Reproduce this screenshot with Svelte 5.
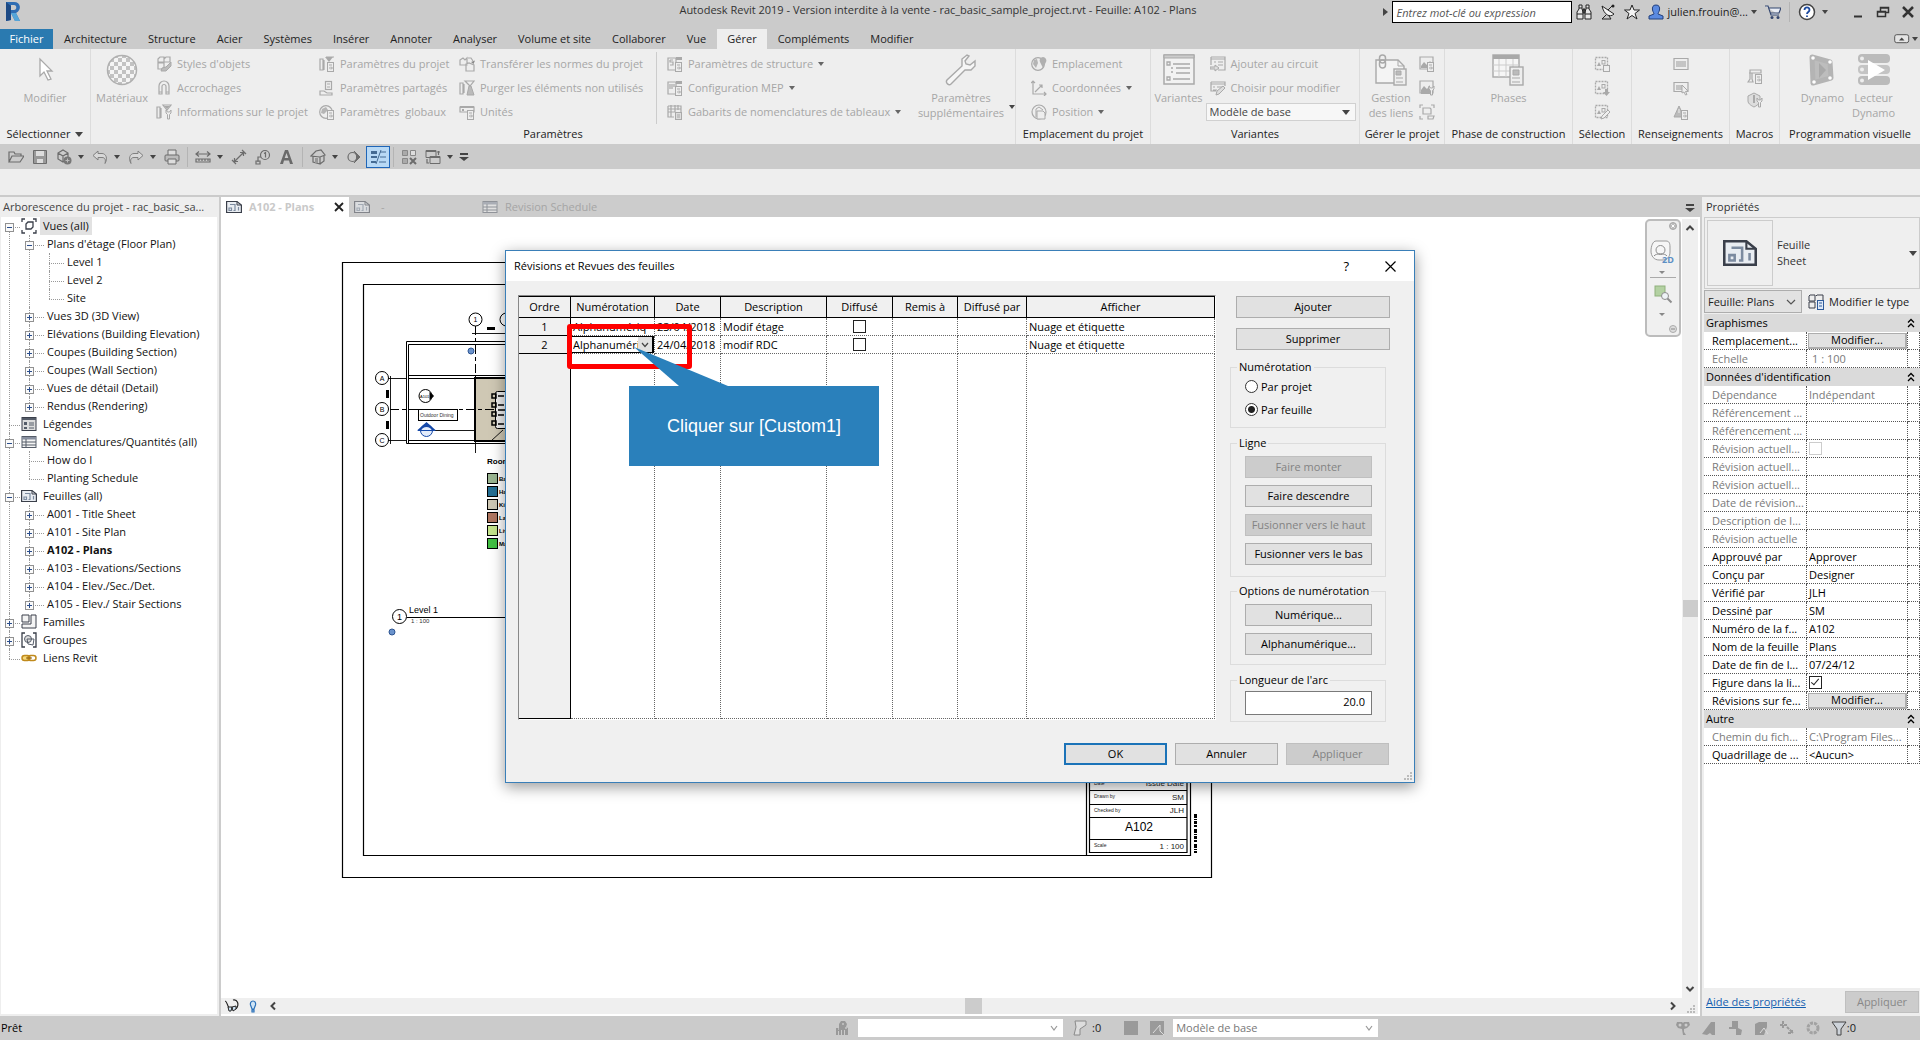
<script>
  // stroke/fill helpers for the greyed out ribbon icons
  const g = 'fill="none" stroke="#a9a9a9" stroke-width="1.2"'
  const d = 'fill="none" stroke="#6c6c6c" stroke-width="1.2"'
  const k = 'fill="none" stroke="#3a3f4a" stroke-width="1.3"'
  const page = '<rect x="8.5" y="6.5" width="6" height="9" fill="#eee" stroke="#a9a9a9"/><path d="M10 9h3M10 12h3M12 10.500l1.500 1.500-1.500 1.500" fill="none" stroke="#a9a9a9"/>'
  const wrench = '<path d="M10 6v3l1.500 1.500V15h2v-4.500L15 9V6l-1.500 2h-2z" fill="#eee" stroke="#a9a9a9"/>'
  const picks = '<path d="M1.500 1.500h12v12h-12z" fill="none" stroke="#a9a9a9" stroke-width="1.300" stroke-dasharray="2 1"/><path d="M3 10l2-4 2 4z" fill="#a9a9a9"/><rect x="8" y="4.500" width="3" height="3.500" fill="none" stroke="#a9a9a9"/>'

  const icons = {
    styles: `<path d="M2 3l2-2h4v5H2zM8 3l2-2h4v5H8zM2 7h6v6H2z" ${g}/><path d="M15 6l-5 5-4 1-1 3h5l5-5z" fill="#bbb" stroke="#a9a9a9"/>`,
    magnet: `<path d="M3 14V6a5 5 0 0 1 10 0v8h-3V6.500a2 2 0 0 0-4 0V14z" ${g}/><path d="M3 12h3M10 12h3" ${g}/>`,
    info: `<path d="M1 3h3v11H1zM5 14V4M7 1h8l-4 5z" ${g}/><path d="M8 2h6l-3 3z" fill="#a9a9a9"/>${wrench}`,
    projParam: `<path d="M1 3h3v11H1zM5 14V4M7 1h8" ${g}/><path d="M6 1h8l-4 5z" fill="#a9a9a9"/>${page}`,
    shared: `<rect x="6.500" y="1.500" width="6" height="8" ${g}/><path d="M8 4h3M8 7h3M1 11h4l3 2h5v2H1z" ${g}/>`,
    global: `<circle cx="7" cy="8" r="6.300" ${g}/><path d="M3 5l4-2 2 3-4 4-3-1z" fill="#b5b5b5"/>${page}`,
    transfer: `<path d="M1 4l3-2 2 2 2-2v7H1zM7 15V8l3-1 5 2v6zM9 2h3l2 3" ${g}/><path d="M12 6l2.500 2L16 4.500z" fill="#888"/>`,
    purge: `<path d="M1 3h3v11H1zM5 13V4M6 1h9l-4 5z" ${g}/><path d="M10 6h2l3 9H8z" fill="#bbb" stroke="#a9a9a9"/>`,
    units: `<path d="M1 3h14v5H1z" ${g}/><path d="M1 2h14v2H1zM3 5h2v2H3z" fill="#a9a9a9"/>${page}`,
    struct: `<path d="M1 2h8v12H1zM3 4h3M3 4v2h3v3H3" ${g}/><path d="M9 1h6v3H9z" fill="#a9a9a9"/>${page}`,
    mep: `<path d="M1 2h8v12H1zM3 4v5M5 4v5M7 4v3" ${g}/><path d="M9 1h6v3H9z" fill="#a9a9a9"/>${page}`,
    sched: `<path d="M1 2h13v9M1 2v11h6M1 5h13M1 8h7M4 1v12M8 1v7M11 1v5" ${g}/><rect x="8.500" y="8.500" width="6" height="7" fill="#ddd" stroke="#a9a9a9"/><path d="M10 11h3M10 13h3" ${g}/>`,
    place: `<circle cx="7" cy="8" r="6.300" ${g}/><path d="M3 4l3-1 1 4-2 5-3-4z" fill="#b5b5b5"/><path d="M12 1a3.500 3.500 0 0 1 3 5l-3 6-3-6a3.500 3.500 0 0 1 3-5z" fill="#b0b0b0"/>`,
    coords: `<path d="M2 1v13h13M0 3l2-2 2 2M13 12l2 2-2 2M4 12l7-7M8 5h3v3" ${g}/>`,
    position: `<circle cx="8" cy="8" r="7" ${g}/><path d="M5 13V5l3-2 4 3M6 7h6l2 2v6H6z" fill="#eee" stroke="#a9a9a9"/>`,
    addSet: `<path d="M1 1h14v13H8M1 1v8M1 3h14M4 6h2M8 6h5M8 9h5" ${g}/><path d="M0 11h5V9l4 3-4 3v-2H0z" fill="#ddd" stroke="#a9a9a9"/>`,
    pick: `<path d="M1 2h14v4M1 2v9h5M1 4h14M3 7h2M7 7h5M3 10h4" ${g}/><path d="M6 15l1-4 6-5 2 2-6 6z" fill="#ddd" stroke="#a9a9a9"/>`,
    decal: `<path d="M1 1h13v12H1z" ${g}/><path d="M2 10l3-4 3 3 3-4 3 4v3H2z" fill="#a9a9a9"/>${page}`,
    decalTool: `<path d="M1 1h13v12H1z" ${g}/><path d="M2 10l3-4 3 3 3-4v9H2z" fill="#a9a9a9"/>${wrench}`,
    start: `<path d="M1 4V1h3M12 1h3v3M1 12v3h3M4 4h7l1 1v5H4zM9 12h6l-1 3H9z" ${g}/>`,
    selSave: picks + `<rect x="9.500" y="9.500" width="6" height="6" fill="#eee" stroke="#a9a9a9"/>`,
    selLoad: picks + `<path d="M11 9h3v3h2l-3.500 4L9 12h2z" fill="#a9a9a9"/>`,
    selEdit: picks + `<path d="M7 15l1-3 6-6 2 2-6 6z" fill="#eee" stroke="#a9a9a9"/>`,
    ids: `<path d="M1 2.500h14v11H1zM4 5v6M6 5v6M8 5v6M10 5v6M12 5v6" ${g}/>`,
    idSel: `<path d="M1 2.500h14v9H1zM4 5v5M6 5v5M8 5v5" ${g}/><path d="M9 5l6 6-2.500.500 1.500 3-1.500.500-1.500-3L9 13z" fill="#eee" stroke="#a9a9a9"/>`,
    warn: `<path d="M6 2l5 11H1z" fill="#bbb" stroke="#a9a9a9"/><path d="M6 5v4" stroke="#eee"/>${page}`,
    macro: `<path d="M3 2h11v3H5v6l1 3H1l2-3zM2 5h3" ${g}/>${page}`,
    macroSec: `<path d="M7 1l6 3v5c0 3-4 5-6 6-2-1-6-3-6-6V4z" fill="#ddd" stroke="#a9a9a9"/><path d="M7 3v8" stroke="#a9a9a9" stroke-width="2"/>${wrench}`,
    // quick access bar
    open: `<path d="M1 13V3h5l1 2h6v2M1 13l3-6h12l-4 6z" ${d}/>`,
    save: `<path d="M1.500 1.500h13v13h-13z" fill="#999" stroke="#6c6c6c"/><path d="M4 2h8v5H4zM5 10h6v4H5z" fill="#ddd"/>`,
    sync: `<path d="M2 4l5-3 5 3v6l-5 3-5-3zM2 4l5 3 5-3M7 7v6" ${d}/><circle cx="11.500" cy="11.500" r="4" fill="#777"/><path d="M9.500 11.500h4M11.500 9.500v4" stroke="#bbb"/>`,
    undo: `<path d="M6 2L1 6.500 6 11V8.500h4c3 0 4 2 3 6 3-5 1-10-3-10H6z" fill="#d8d8d8" stroke="#808080"/>`,
    redo: `<path d="M10 2l5 4.500-5 4.500V8.500H6c-3 0-4 2-3 6-3-5-1-10 3-10h4z" fill="#d8d8d8" stroke="#808080"/>`,
    print: `<path d="M4 6V1h8v5" fill="#ddd" stroke="#6c6c6c"/><rect x="1" y="6" width="14" height="6" rx="1" fill="#bbb" stroke="#6c6c6c"/><path d="M4 10h8v5H4z" fill="#ddd" stroke="#6c6c6c"/>`,
    measure: `<path d="M1 5h14M4 2.500L1 5l3 2.500M12 2.500L15 5l-3 2.500M1 10h14v3H1zM4 10v2M7 10v2M10 10v2M13 10v2" ${d}/>`,
    aligned: `<path d="M4 12l8-8M9 3.500h3.500V7M3.500 9v3.500H7M1 11l4 4M11 1l4 4" ${d}/>`,
    tag: `<circle cx="10" cy="6" r="4.500" ${d}/><path d="M10.500 8.500v-5L9 4.500M6 8H3v5M1 12h4v3H1z" ${d}/>`,
    text: `<path d="M1 15L6 1h3l5 14h-3l-1-3.500H5L4 15zM5.700 9h3.600L7.500 4z" fill="#6a6a6a" fill-rule="evenodd"/>`,
    house: `<path d="M1 7l5-5 5-1 4 5-5 2zM3 7v6l7 2V8M10 15l4-3V6" ${d}/><path d="M5 9h3v5H5z" fill="#999"/>`,
    section: `<circle cx="6.500" cy="8" r="4.500" ${d}/><path d="M8 2l6 6-6 6c3.500-4 3.500-8 0-12z" fill="#6c6c6c" stroke="#6c6c6c"/>`,
    thin: `<path d="M1 2h6v3H1zM1 7h6v2H1zM1 12h5v2H1z" fill="#456b93"/><path d="M10 3h6M10 8h6M9 13h7M6 15l5-14" fill="none" stroke="#456b93"/>`,
    closeHid: `<path d="M1.500 1.500h5v5h-5zM1.500 9.500h5v5h-5z" fill="#aaa" stroke="#888"/><path d="M9.500 1.500h5v5h-5z" fill="#ddd" stroke="#888"/><path d="M9 9l6 6M15 9l-6 6" stroke="#6c6c6c" stroke-width="2"/>`,
    windows: `<path d="M1 1.500h10v7H1zM5 7.500h10v7H5z" fill="#ccc" stroke="#6c6c6c"/><path d="M1 1h10v2H1zM5 7h10v2H5z" fill="#6c6c6c"/><path d="M12 3h3M13.500 2v4M2 10v4h2" ${d}/>`,
    // browser + tabs
    views: `<path d="M1 4V1h3M12 1h3v3M1 12v3h3M12 15h3v-3M5 6l2-2h5v5l-2 2H5z" ${k}/>`,
    legend: `<rect x="1" y="1.500" width="14" height="13" fill="#ddd" stroke="#3a3f4a"/><path d="M1 2h14v2H1zM3 6h3v3H3zM3 11h3v2H3z" fill="#555c68"/><path d="M8 7h5M8 9h5M8 12h5" stroke="#555c68"/>`,
    table: `<rect x="1" y="2.500" width="14" height="11" fill="#f4f4f4" stroke="#555c68"/><path d="M1 3h14v2.500H1z" fill="#8890a0"/><path d="M1 8h14M1 11h14M5 5v8" stroke="#555c68"/>`,
    sheet: `<path d="M.600 2.500h10.400l4.400 3.500v7.500H.600z" fill="#e9edf2" stroke="#3a3f4a" stroke-width="1.200"/><path d="M11 2.500V6h4" fill="none" stroke="#3a3f4a"/><path d="M3 9h2.500v2.500H3zM4 5.500h5v6H7.500M12.500 8v3.500" fill="none" stroke="#7c8ba0" stroke-width="1.200"/>`,
    family: `<path d="M1 1h7v7H1zM10 1h5v13H1v-4h9z" fill="#f4f4f4" stroke="#3a3f4a"/>`,
    group: `<path d="M4 1H1v14h3M12 1h3v14h-3" ${k}/><circle cx="7" cy="7" r="3.500" fill="#ddd" stroke="#555c68"/><path d="M6 7h7l-1 6-5-1z" fill="none" stroke="#555c68"/>`,
    link: `<rect x="1" y="5.500" width="8" height="5" rx="2.500" fill="#f6d878" stroke="#c08a1c" stroke-width="1.500"/><rect x="7" y="5.500" width="8" height="5" rx="2.500" fill="none" stroke="#c08a1c" stroke-width="1.500"/><path d="M5 8h6" stroke="#8a5c10"/>`,
    editType: `<path d="M1 2l1-1h5v6H1zM8 2l1-1h6v6M1 8h6v6H1z" fill="none" stroke="#3a3f4a"/><rect x="9.500" y="6.500" width="6" height="9" fill="#dfe9f7" stroke="#2d5a9a"/><path d="M11 9h3M11 12h3" stroke="#2d5a9a"/>`,
    // title bar
    binoculars: `<path d="M3 1h3v4l1 3v7H1V8l2-3zM10 1h3v4l2 3v7H9V8l1-3z" fill="#e6e6e6" stroke="#222"/><path d="M7 5h2v4H7zM1 10h6M9 10h6M3 4h3M10 4h3" fill="#555" stroke="#222"/>`,
    dish: `<path d="M2 2l12 8c-4 4-10 1-12-8z" fill="#f4f4f4" stroke="#222"/><path d="M8 6l5-5M6 11l-4 4h9l-2-3" fill="none" stroke="#222"/><circle cx="13" cy="2" r="1.500" fill="#222"/>`,
    star: `<path d="M8 1l2 5h5.500l-4.500 3.500L13 15l-5-3.500L3 15l2-5.500L.500 6H6z" fill="#f4f4f4" stroke="#222"/>`,
    user: `<path d="M8 1c3 0 4 2 3.500 5-.500 2-1.500 3-1.500 4l5 2v3H1v-3l5-2c0-1-1-2-1.500-4C4 3 5 1 8 1z" fill="#5b8ae0" stroke="#23407c"/>`,
    cart: `<path d="M0 2h3l3 9h8M4 4h12l-2 5H5.500" fill="#e9edf5" stroke="#33466f" stroke-width="1.200"/><circle cx="7" cy="13.500" r="1.500" fill="#33466f"/><circle cx="13" cy="13.500" r="1.500" fill="#33466f"/>`,
    // status bar
    people: `<path d="M2 15V8h3V4l2-3h4l2 3-1 3 2 1v7h-3v-5h-1v5H8v-5H7v5H5v-4H4v4z" fill="#999"/><path d="M8 4h2M4 9h1M11 8h2" stroke="#ddd"/>`,
    brush: `<path d="M4 1h11v4l-6 4v6H3l2-8z" fill="#ddd" stroke="#8a8a8a"/>`,
    block: `<path d="M1 1h14v14H1z" fill="#9a9a9a"/>`,
    block2: `<path d="M1 1h14v14H1z" fill="#9a9a9a"/><path d="M4 13l7-8v6l4 4" fill="none" stroke="#ddd"/>`,
    s1: `<path d="M2 2h5l1 1 1-1h5l1 3-3 3-3 1v3l2 3H8l-1-6-4-1-2-3z" fill="#999"/><circle cx="5" cy="5" r="1.500" fill="#ccc"/><circle cx="11" cy="5" r="1.500" fill="#ccc"/>`,
    s2: `<path d="M1 14l9-12h4v13h-3l-2-2-3 2z" fill="#999"/>`,
    s3: `<path d="M5 1h6v7l4 2-1 5H9V9H2V7h3z" fill="#999"/>`,
    s4: `<path d="M2 4l4-2h8v5l-3 8H2z" fill="#999"/><path d="M7 13l4-5 4 6" fill="none" stroke="#ddd"/>`,
    s5: `<path d="M1 5h8M4 1v8M8 7l6 6M9 13h4V9" fill="none" stroke="#999" stroke-width="2" stroke-dasharray="3 1"/>`,
    gear: `<circle cx="8" cy="8" r="5" fill="none" stroke="#a2a2a2" stroke-width="3" stroke-dasharray="3 1"/>`,
    funnel: `<path d="M1 2h14l-5 7v6H6V9z" fill="#cdd3da" stroke="#444"/>`,
    glasses: `<path d="M1 3c2 0 2 4 4 7M9 2c4-1 7 4 3 9" fill="none" stroke="#222" stroke-width="1.200"/><path d="M4 9h4l-1 4H5zM8 9l4-1v3l-3 2z" fill="#cfe4f5" stroke="#222"/>`,
    bulb: `<path d="M8 3c2 0 3 2 2.500 4L9 11H7L5.500 7C5 5 6 3 8 3zM7 12h2v2H7z" fill="#cfe4f5" stroke="#2a70b8" stroke-width="1.200"/>`,
    // large, drawn in a 32 box
    cursor: `<path d="M11 5v17l4-4 4 8 3-1-4-8h5z" fill="#fff" stroke="#a9a9a9" stroke-width="1.300"/>`,
    wrenchBig: `<path d="M22 1l-5 4v7L2 26c-2 3 2 6 4 4L20 16h6l4-4V7l-5 4-4-1-1-3 4-5z" fill="#f6f6f6" stroke="#a9a9a9" stroke-width="1.400"/>`,
    options: `<rect x="1" y="1" width="30" height="29" fill="#f2f2f2" stroke="#a9a9a9" stroke-width="1.500"/><path d="M1 1h30v3H1z" fill="#ccc" stroke="#a9a9a9"/><path d="M4 8h3v3H4zM4 23h3v3H4zM8 14h2M8 18h2" fill="none" stroke="#a9a9a9" stroke-width="1.300"/><path d="M10 10h17M13 14h14M13 19h14M10 25h17" stroke="#a9a9a9" stroke-width="1.300"/>`,
    links: `<path d="M1 6h22l6 6v17H1z" fill="#f4f4f4" stroke="#a9a9a9" stroke-width="1.400"/><path d="M23 6v6h6" fill="none" stroke="#a9a9a9"/><rect x="4.500" y="1" width="6" height="8" rx="3" fill="none" stroke="#a9a9a9" stroke-width="1.500"/><rect x="4.500" y="6" width="6" height="8" rx="3" fill="none" stroke="#a9a9a9" stroke-width="1.500"/><rect x="19" y="15" width="12" height="16" fill="#eee" stroke="#a9a9a9" stroke-width="1.400"/><path d="M21 17h5v4h-5zM21 24h7M21 28h7" fill="#bbb" stroke="#a9a9a9"/>`,
    phases: `<rect x="1" y="1" width="26" height="22" fill="#f6f6f6" stroke="#a9a9a9" stroke-width="1.400"/><path d="M1 1h26v4H1z" fill="#a9a9a9"/><path d="M1 11h26M1 17h26M7 5v18M14 5v18M21 5v18" stroke="#ccc"/><rect x="18" y="13" width="13" height="18" fill="#eee" stroke="#a9a9a9" stroke-width="1.400"/><path d="M21 16h6v5h-6zM20 24h8M20 28h8" fill="#bbb" stroke="#a9a9a9"/>`,
    dynamo: `<path d="M6 3l18 5 1 16L7 29z" fill="#bdbdbd" stroke="#b4b4b4" stroke-width="5" stroke-linejoin="round"/><path d="M13 9l7 7-7 8z" fill="#a9a9a9"/><circle cx="7" cy="4" r="1.800" fill="#fff"/><circle cx="24" cy="8" r="1.800" fill="#fff"/><circle cx="24" cy="24" r="1.800" fill="#fff"/><circle cx="8" cy="28" r="1.800" fill="#fff"/>`,
    player: `<rect x="0" y="0" width="32" height="9" rx="4" fill="#bbb"/><rect x="0" y="11" width="32" height="9" rx="4" fill="#c4c4c4"/><rect x="0" y="22" width="32" height="9" rx="4" fill="#bbb"/><path d="M10 6l17 10-17 10z" fill="#fff"/><circle cx="4" cy="4.500" r="2" fill="#eee"/><circle cx="4" cy="15.500" r="2" fill="#eee"/><circle cx="4" cy="26.500" r="2" fill="#eee"/>`
  }

  const tabs = ['Fichier', 'Architecture', 'Structure', 'Acier', 'Systèmes', 'Insérer', 'Annoter', 'Analyser', 'Volume et site', 'Collaborer', 'Vue', 'Gérer', 'Compléments', 'Modifier']

  const settings = [
    [['styles', "Styles d'objets"], ['magnet', 'Accrochages'], ['info', 'Informations sur le projet']],
    [['projParam', 'Paramètres du projet'], ['shared', 'Paramètres partagés'], ['global', 'Paramètres  globaux']],
    [['transfer', 'Transférer les normes du projet'], ['purge', 'Purger les éléments non utilisés'], ['units', 'Unités']]
  ]
  const templates = [['struct', 'Paramètres de structure', 1], ['mep', 'Configuration MEP', 1], ['sched', 'Gabarits de nomenclatures de tableaux', 1]]
  const location = [['place', 'Emplacement'], ['coords', 'Coordonnées', 1], ['position', 'Position', 1]]

  const quick = ['open', 'save', 'sync', 'v', 'undo', 'v', 'redo', 'v', 'print', '|', 'measure', 'v', 'aligned', 'tag', 'text', '|', 'house', 'v', 'section', 'thin', '|', 'closeHid', 'windows', 'v']

  const tree = [
    { t: 'Vues (all)', icon: 'views', open: true, sel: true, kids: [
      { t: "Plans d'étage (Floor Plan)", open: true, kids: [{ t: 'Level 1' }, { t: 'Level 2' }, { t: 'Site' }] },
      { t: 'Vues 3D (3D View)', open: false },
      { t: 'Elévations (Building Elevation)', open: false },
      { t: 'Coupes (Building Section)', open: false },
      { t: 'Coupes (Wall Section)', open: false },
      { t: 'Vues de détail (Detail)', open: false },
      { t: 'Rendus (Rendering)', open: false }
    ] },
    { t: 'Légendes', icon: 'legend' },
    { t: 'Nomenclatures/Quantités (all)', icon: 'table', open: true, kids: [{ t: 'How do I' }, { t: 'Planting Schedule' }] },
    { t: 'Feuilles (all)', icon: 'sheet', open: true, kids: [
      { t: 'A001 - Title Sheet', open: false },
      { t: 'A101 - Site Plan', open: false },
      { t: 'A102 - Plans', open: false, bold: true },
      { t: 'A103 - Elevations/Sections', open: false },
      { t: 'A104 - Elev./Sec./Det.', open: false },
      { t: 'A105 - Elev./ Stair Sections', open: false }
    ] },
    { t: 'Familles', icon: 'family', open: false },
    { t: 'Groupes', icon: 'group', open: false },
    { t: 'Liens Revit', icon: 'link' }
  ]

  // [name, value, kind, read only]
  const props = [
    ['Graphismes'],
    ['Remplacement...', 'Modifier...', 'button'],
    ['Echelle', '1 : 100', 'text', 1],
    ["Données d'identification"],
    ['Dépendance', 'Indépendant', 'text', 1],
    ['Référencement ...', '', 'text', 1],
    ['Référencement ...', '', 'text', 1],
    ['Révision actuell...', false, 'check', 1],
    ['Révision actuell...', '', 'text', 1],
    ['Révision actuell...', '', 'text', 1],
    ['Date de révision...', '', 'text', 1],
    ['Description de l...', '', 'text', 1],
    ['Révision actuelle', '', 'text', 1],
    ['Approuvé par', 'Approver', 'text'],
    ['Conçu par', 'Designer', 'text'],
    ['Vérifié par', 'JLH', 'text'],
    ['Dessiné par', 'SM', 'text'],
    ['Numéro de la f...', 'A102', 'text'],
    ['Nom de la feuille', 'Plans', 'text'],
    ['Date de fin de l...', '07/24/12', 'text'],
    ['Figure dans la li...', true, 'check'],
    ['Révisions sur fe...', 'Modifier...', 'button'],
    ['Autre'],
    ['Chemin du fich...', 'C:\\Program Files...', 'text', 1],
    ['Quadrillage de ...', '<Aucun>', 'text']
  ]

  const swatches = [['#9ab591', 'Ba'], ['#256f94', 'Ha'], ['#cfc8b4', 'Ki'], ['#b07660', 'La'], ['#c5e58c', 'Liv'], ['#43bf43', 'Ma']]
  const bubbles = [['A', 378], ['B', 409], ['C', 440]]

  let numbering = $state('feuille')
  let arc = $state('20.0')
</script>

{#snippet icon(name, size = 16)}
  <svg class="ico" width={size} height={size} viewBox={size > 20 ? '0 0 32 32' : '0 0 16 16'} aria-hidden="true">{@html icons[name]}</svg>
{/snippet}

{#snippet item(name, label, arrow)}
  <button class="small" disabled>{@render icon(name)}<span>{label}</span>{#if arrow}<i class="caret"></i>{/if}</button>
{/snippet}

{#snippet branch(nodes)}
  <ul>
    {#each nodes as n}
      <li>
        <div class="node" class:leaf={!n.icon}>
          {#if n.open !== undefined}
            <button class="toggle" aria-label={n.t}>
              <svg width="9" height="9" viewBox="0 0 9 9"><rect x=".5" y=".5" width="8" height="8" fill="#fafafa" stroke="#919191" /><path d={n.open ? 'M2 4.500h5' : 'M2 4.500h5M4.500 2v5'} stroke="#2b4e8c" /></svg>
            </button>
          {/if}
          {#if n.icon}{@render icon(n.icon)}{/if}
          <span class:sel={n.sel} class:bold={n.bold}>{n.t}</span>
        </div>
        {#if n.kids}{@render branch(n.kids)}{/if}
      </li>
    {/each}
  </ul>
{/snippet}

<div class="app">
  <header class="title">
    <svg class="logo" width="18" height="24" viewBox="0 0 18 24"><path d="M2 2h8c7 0 8 8 2 11l4 8h-5L7 13v7l-5 1z" fill="#2f6db3" /><path d="M7 5h3c3 0 3 5 0 5H7z" fill="#cbcbcb" /><path d="M2 2l5 4v14l-5 1z" fill="#1d4a85" /><path d="M7 13h5l4 8h-5z" fill="#55a5d8" /></svg>
    <h1>Autodesk Revit 2019 - Version interdite à la vente - rac_basic_sample_project.rvt - Feuille: A102 - Plans</h1>
    <div class="tools">
      <i class="play"></i>
      <input class="search" type="text" placeholder="Entrez mot-clé ou expression" aria-label="Recherche" />
      <button aria-label="Rechercher">{@render icon('binoculars')}</button>
      <button aria-label="Communication">{@render icon('dish')}</button>
      <button aria-label="Favoris">{@render icon('star')}</button>
      <button class="account">{@render icon('user')}<span>julien.frouin@...</span><i class="caret"></i></button>
      <button aria-label="Boutique">{@render icon('cart')}</button>
      <i class="bar"></i>
      <button class="help" aria-label="Aide"><svg width="18" height="18" viewBox="0 0 18 18"><circle cx="9" cy="9" r="7.500" fill="#fff" stroke="#444" stroke-width="1.500" /><path d="M6.500 7c0-3.500 5-3.500 5 0 0 2-2.500 2-2.500 4M9 12.500v1.500" fill="none" stroke="#1e4ba0" stroke-width="1.800" /></svg><i class="caret"></i></button>
      <button class="win" aria-label="Réduire"><svg width="14" height="14" viewBox="0 0 14 14"><path d="M3 11.500h8" stroke="#333" stroke-width="2" /></svg></button>
      <button class="win" aria-label="Restaurer"><svg width="14" height="14" viewBox="0 0 14 14"><path d="M1.500 6.500h8v5h-8zM4.500 6V2.500h8v5h-3M4 3h9M1 7h9" fill="none" stroke="#333" stroke-width="1.500" /></svg></button>
      <button class="win" aria-label="Fermer"><svg width="14" height="14" viewBox="0 0 14 14"><path d="M2 2l10 10M12 2L2 12" stroke="#333" stroke-width="2.500" /></svg></button>
    </div>
  </header>

  <nav class="tabs">
    {#each tabs as t}
      <button class:file={t == 'Fichier'} class:on={t == 'Gérer'}>{t}</button>
    {/each}
    <span class="mini"><svg width="16" height="10" viewBox="0 0 16 10"><rect x=".7" y=".7" width="14" height="8" rx="2" fill="#e4e4e4" stroke="#555" /><path d="M5 6.500L7.700 3.500 10.500 6.500z" fill="#444" /></svg><i class="caret"></i></span>
  </nav>

  <section class="ribbon">
    <div class="panel p-select">
      <div class="body"><button class="big" disabled>{@render icon('cursor', 32)}<span>Modifier</span></button></div>
      <h2>Sélectionner <i class="caret wide"></i></h2>
    </div>
    <div class="panel p-settings">
      <div class="body">
        <button class="big materials" disabled>
          <svg class="ico" width="32" height="32" viewBox="0 0 32 32">
            <defs><pattern id="chk" width="8" height="8" patternUnits="userSpaceOnUse"><rect width="8" height="8" fill="#f5f5f5" /><path d="M0 0h4v4H0zM4 4h4v4H4z" fill="#c2c2c2" /></pattern></defs>
            <circle cx="16" cy="16" r="14.500" fill="url(#chk)" stroke="#b0b0b0" stroke-width="1.500" />
          </svg>
          <span>Matériaux</span>
        </button>
        {#each settings as col}
          <div class="col">{#each col as [n, l]}{@render item(n, l)}{/each}</div>
        {/each}
        <i class="rule"></i>
        <div class="col">{#each templates as [n, l, a]}{@render item(n, l, a)}{/each}</div>
        <button class="big" disabled>{@render icon('wrenchBig', 32)}<span>Paramètres<br />supplémentaires</span></button>
        <i class="caret more"></i>
      </div>
      <h2>Paramètres</h2>
    </div>
    <div class="panel p-location">
      <div class="body"><div class="col">{#each location as [n, l, a]}{@render item(n, l, a)}{/each}</div></div>
      <h2>Emplacement du projet</h2>
    </div>
    <div class="panel p-options">
      <div class="body">
        <button class="big" disabled>{@render icon('options', 32)}<span>Variantes</span></button>
        <div class="col">
          {@render item('addSet', 'Ajouter au circuit')}
          {@render item('pick', 'Choisir pour modifier')}
          <div class="drop"><select aria-label="Variante active"><option>Modèle de base</option></select><i class="caret wide"></i></div>
        </div>
      </div>
      <h2>Variantes</h2>
    </div>
    <div class="panel p-manage">
      <div class="body">
        <button class="big" disabled>{@render icon('links', 32)}<span>Gestion<br />des liens</span></button>
        <div class="col">{#each ['decal', 'decalTool', 'start'] as n}{@render item(n, '')}{/each}</div>
      </div>
      <h2>Gérer le projet</h2>
    </div>
    <div class="panel p-phase">
      <div class="body"><button class="big" disabled>{@render icon('phases', 32)}<span>Phases</span></button></div>
      <h2>Phase de construction</h2>
    </div>
    <div class="panel p-selection">
      <div class="body"><div class="col">{#each ['selSave', 'selLoad', 'selEdit'] as n}{@render item(n, '')}{/each}</div></div>
      <h2>Sélection</h2>
    </div>
    <div class="panel p-inquiry">
      <div class="body"><div class="col">{#each ['ids', 'idSel', 'warn'] as n}{@render item(n, '')}{/each}</div></div>
      <h2>Renseignements</h2>
    </div>
    <div class="panel p-macros">
      <div class="body"><div class="col mid">{#each ['macro', 'macroSec'] as n}{@render item(n, '')}{/each}</div></div>
      <h2>Macros</h2>
    </div>
    <div class="panel p-visual">
      <div class="body">
        <button class="big" disabled>{@render icon('dynamo', 32)}<span>Dynamo</span></button>
        <button class="big" disabled>{@render icon('player', 32)}<span>Lecteur<br />Dynamo</span></button>
      </div>
      <h2>Programmation visuelle</h2>
    </div>
  </section>

  <div class="quick">
    {#each quick as q}
      {#if q == 'v'}<i class="caret"></i>
      {:else if q == '|'}<i class="bar"></i>
      {:else}<button class:lit={q == 'thin'} aria-label={q}>{@render icon(q)}</button>{/if}
    {/each}
    <i class="caret lined"></i>
  </div>
  <div class="optbar"></div>

  <main>
    <aside class="browser">
      <h3>Arborescence du projet - rac_basic_sa...</h3>
      <div class="tree">{@render branch(tree)}</div>
    </aside>

    <section class="docs">
      <div class="doctabs">
        <div class="doctab active">{@render icon('sheet')}<b>A102 - Plans</b><button aria-label="Fermer l'onglet"><svg width="10" height="10" viewBox="0 0 10 10"><path d="M1 1l8 8M9 1L1 9" stroke="#222" stroke-width="1.800" /></svg></button></div>
        <div class="doctab blank">{@render icon('sheet')}<span>-</span></div>
        <div class="doctab">{@render icon('table')}<span>Revision Schedule</span></div>
        <i class="caret lined"></i>
      </div>
      <div class="view">
        <div class="canvas">
          <svg class="drawing" width="1000" height="700" viewBox="221 217 1000 700" fill="none" stroke="#000">
            <path d="M342.500 262.500h869v615h-869zM363.500 284.500h827v571h-827z" stroke-width="1.200" />
            <!-- title block -->
            <path d="M1086.500 700v155M1089.500 700v152.500h97.500V700M1089 790.500h98M1089 804.500h98M1089 817.500h98M1089 839.500h98" stroke-width="1.200" />
            <path d="M1195.500 814v39" stroke-width="3" stroke-dasharray="4 1 1 1 3 1 2 2" />
            <g fill="#222" stroke="none" font-size="5">
              <text x="1094" y="785">Date</text><text x="1094" y="798">Drawn by</text><text x="1094" y="812">Checked by</text><text x="1094" y="847">Scale</text>
            </g>
            <g fill="#222" stroke="none" font-size="8" text-anchor="end">
              <text x="1184" y="786">Issue Date</text><text x="1184" y="800">SM</text><text x="1184" y="813">JLH</text><text x="1184" y="849">1 : 100</text>
            </g>
            <text x="1139" y="831" font-size="12" fill="#000" stroke="none" text-anchor="middle">A102</text>
            <!-- floor plan -->
            <rect x="475" y="378" width="60" height="63" fill="#cfc8b4" stroke="none" />
            <path d="M520 341.500H406.500v102H520M520 344.500H408.500v99M408 375.500h112M408 378.500h112M408 440.500h112" />
            <path d="M475 377v65M475 378h40M475 441h40" stroke-width="2" />
            <path d="M475.500 326v52M390 409.500h130" stroke-dasharray="9 3 4 3" />
            <path d="M475.500 441v12M472 333.500h40M390.500 376v68M388 378.500h18M388 440.500h18M434 430.500h41M491 441l12-11" stroke-width=".9" />
            <path d="M487 328.500h8" stroke-width="3" />
            <path d="M387.500 390v8M387.500 421v8" stroke-width="3" />
            <rect x="495.500" y="391.500" width="12" height="37" fill="#eee" rx="2" />
            <path d="M492 394h4v4h-4zM492 403h4v4h-4zM492 412h4v4h-4zM492 421h4v4h-4zM498 396h6M498 405h6M498 410h8M498 415h6M498 424h6" stroke-width="1.500" />
            <circle cx="475.500" cy="319.500" r="6.500" fill="#fff" /><circle cx="506.500" cy="319.500" r="6.500" fill="#fff" />
            <text x="475.500" y="322" font-size="7" fill="#000" stroke="none" text-anchor="middle">1</text>
            {#each bubbles as [l, y]}
              <circle cx="382" cy={y} r="6.500" fill="#fff" />
              <text x="382" y={y + 3} font-size="7" fill="#000" stroke="none" text-anchor="middle">{l}</text>
            {/each}
            <circle cx="425.500" cy="396" r="6.500" fill="#fff" /><path d="M430 392.500l3.500 3.500-3.500 3.500z" fill="#000" />
            <text x="420" y="398" font-size="4" fill="#000" stroke="none">A101</text>
            <rect x="418.500" y="409.500" width="39" height="11" fill="#fff" />
            <text x="420" y="417" font-size="5" fill="#333" stroke="none">Outdoor Dining</text>
            <circle cx="426.500" cy="430.500" r="6" fill="#e3ecfb" stroke="#1548a8" /><path d="M417 430.500l9.500-8.500 9.500 8.500h-4a6 6 0 0 0-11 0z" fill="#1548a8" stroke="none" /><path d="M418 430.500h17" stroke="#1548a8" />
            <circle cx="471" cy="351" r="3" fill="#6b93cc" stroke="#2d5592" /><circle cx="392" cy="632" r="3" fill="#6b93cc" stroke="#2d5592" />
            <!-- room legend -->
            <text x="487" y="464" font-size="8" font-weight="bold" fill="#000" stroke="none">Room Legend</text>
            {#each swatches as [c, l], i}
              <rect x="487.500" y={473.5 + i * 13} width="10" height="10" fill={c} />
              <text x="499" y={481 + i * 13} font-size="6" font-weight="bold" fill="#000" stroke="none">{l}</text>
            {/each}
            <circle cx="399.500" cy="616.500" r="7" fill="#fff" /><path d="M407 617.500h120" />
            <text x="399.500" y="620" font-size="9" fill="#000" stroke="none" text-anchor="middle">1</text>
            <text x="409" y="613" font-size="9" fill="#000" stroke="none">Level 1</text>
            <text x="411" y="623" font-size="6" fill="#333" stroke="none">1 : 100</text>
          </svg>
          <div class="navbar">
            <svg width="32" height="114" viewBox="0 0 32 114" fill="none" stroke="#8d8d8d">
              <circle cx="26" cy="5" r="3.500" fill="#bbb" stroke="#aaa" /><path d="M24.500 3.500l3 3M27.500 3.500l-3 3" stroke="#fff" />
              <path d="M9 20h10c3 0 4 2 4 6v5c0 5-3 8-8 8H12c-5 0-8-4-8-9s2-10 5-10z" stroke="#999" fill="#f6f6f6" /><circle cx="13.500" cy="29" r="4.500" /><path d="M7 35c2-3 11-3 13 0" />
              <text x="15" y="42" fill="#5c8fc4" stroke="none" font-size="9" font-weight="bold">2D</text>
              <path d="M12 50h6l-3 3z" fill="#888" stroke="none" /><path d="M3 56.500h26" stroke="#aaa" />
              <rect x="8" y="65" width="10" height="10" fill="#b3d1a2" stroke="#8fb07c" /><circle cx="18" cy="75" r="3.500" fill="#eef3f6" /><path d="M20.500 77.500l4 4" stroke-width="2" />
              <path d="M12 92h6l-3 3z" fill="#888" stroke="none" />
              <circle cx="26" cy="108" r="3.500" fill="#ddd" stroke="#aaa" /><path d="M24 108h4" stroke="#888" />
            </svg>
          </div>
        </div>
        <div class="vscroll">
          <svg width="10" height="6" viewBox="0 0 10 6"><path d="M1.500 5L5 1.500 8.500 5" fill="none" stroke="#444" stroke-width="2" /></svg>
          <i class="thumb"></i>
          <svg width="10" height="6" viewBox="0 0 10 6"><path d="M1.500 1L5 4.500 8.500 1" fill="none" stroke="#444" stroke-width="2" /></svg>
        </div>
      </div>
      <div class="hscroll">
        {@render icon('glasses')}{@render icon('bulb')}
        <svg class="prev" width="6" height="10" viewBox="0 0 6 10"><path d="M5 1.500L1.500 5 5 8.500" fill="none" stroke="#444" stroke-width="2" /></svg>
        <i class="thumb"></i>
        <svg width="6" height="10" viewBox="0 0 6 10"><path d="M1 1.500L4.500 5 1 8.500" fill="none" stroke="#444" stroke-width="2" /></svg>
        <svg class="grip" width="8" height="8" viewBox="0 0 8 8"><path d="M6 0h2v2H6zM3 3h2v2H3zM6 3h2v2H6zM0 6h2v2H0zM3 6h2v2H3zM6 6h2v2H6z" fill="#bbb" /></svg>
      </div>
    </section>

    <aside class="props">
      <h3>Propriétés</h3>
      <div class="type">
        <div class="thumbnail"><svg width="34" height="34" viewBox="0 0 16 16">{@html icons.sheet}</svg></div>
        <p>Feuille<br />Sheet</p>
        <i class="caret wide"></i>
      </div>
      <div class="filter">
        <div class="drop"><select aria-label="Filtre"><option>Feuille: Plans</option></select><svg width="10" height="6" viewBox="0 0 10 6"><path d="M1 1l4 4 4-4" fill="none" stroke="#555" stroke-width="1.200" /></svg></div>
        <button>{@render icon('editType')}<span>Modifier le type</span></button>
      </div>
      <div class="grid">
        <table>
          <colgroup><col class="c1" /><col /><col class="c3" /></colgroup>
          <tbody>
            {#each props as [name, value, kind, ro]}
              {#if !kind}
                <tr class="group"><th colspan="3"><div>{name}<svg width="8" height="10" viewBox="0 0 8 10"><path d="M1 4.500L4 1.500l3 3M1 9l3-3 3 3" fill="none" stroke="#000" stroke-width="1.300" /></svg></div></th></tr>
              {:else}
                <tr class:ro>
                  <td class="name">{name}</td>
                  <td class:indent={name == 'Echelle'} class:tight={kind == 'button'}>
                    {#if kind == 'button'}<button>{value}</button>
                    {:else if kind == 'check'}<input type="checkbox" checked={value} disabled={!!ro} aria-label={name} />
                    {:else}{value}{/if}
                  </td>
                  <td></td>
                </tr>
              {/if}
            {/each}
          </tbody>
        </table>
      </div>
      <footer><a href="#aide">Aide des propriétés</a><button disabled>Appliquer</button></footer>
    </aside>
  </main>

  <footer class="status">
    <span class="ready">Prêt</span>
    {@render icon('people')}
    <div class="drop"><select aria-label="Sous-projet"><option></option></select><svg width="8" height="6" viewBox="0 0 8 6"><path d="M1 1l3 4 3-4" fill="none" stroke="#999" stroke-width="1.200" /></svg></div>
    <span class="count">{@render icon('brush')}:0</span>
    {@render icon('block')}{@render icon('block2')}
    <div class="drop"><select aria-label="Variante"><option>Modèle de base</option></select><svg width="8" height="6" viewBox="0 0 8 6"><path d="M1 1l3 4 3-4" fill="none" stroke="#999" stroke-width="1.200" /></svg></div>
    <div class="toggles">
      {#each ['s1', 's2', 's3', 's4', 's5', 'gear'] as n}{@render icon(n)}{/each}
      <span>{@render icon('funnel')}:0</span>
    </div>
  </footer>

  <div class="dialog" role="dialog" aria-labelledby="dlg">
    <div class="dlgbar">
      <h2 id="dlg">Révisions et Revues des feuilles</h2>
      <button aria-label="Aide">?</button>
      <button aria-label="Fermer"><svg width="11" height="11" viewBox="0 0 11 11"><path d="M.5.500l10 10M10.500.500l-10 10" stroke="#000" stroke-width="1.200" /></svg></button>
    </div>
    <div class="dlgmain">
      <div class="sheetbox">
        <table class="revs">
          <colgroup><col class="r1" /><col class="r2" /><col class="r3" /><col class="r4" /><col class="r5" /><col class="r6" /><col class="r7" /><col /></colgroup>
          <thead>
            <tr>{#each ['Ordre', 'Numérotation', 'Date', 'Description', 'Diffusé', 'Remis à', 'Diffusé par', 'Afficher'] as h}<th>{h}</th>{/each}</tr>
          </thead>
          <tbody>
            <tr><th>1</th><td>Alphanumériq</td><td>23/04/2018</td><td>Modif étage</td><td class="mid"><input type="checkbox" aria-label="Diffusé 1" /></td><td></td><td></td><td>Nuage et étiquette</td></tr>
            <tr>
              <th>2</th>
              <td class="edit"><div class="drop"><select aria-label="Numérotation"><option>Alphanumérique</option></select><span class="arrow"><svg width="8" height="6" viewBox="0 0 8 6"><path d="M1 1l3 3.500L7 1" fill="none" stroke="#444" stroke-width="1.200" /></svg></span></div></td>
              <td>24/04/2018</td><td>modif RDC</td><td class="mid"><input type="checkbox" aria-label="Diffusé 2" /></td><td></td><td></td><td>Nuage et étiquette</td>
            </tr>
            <tr class="rest"><th></th><td></td><td></td><td></td><td></td><td></td><td></td><td></td></tr>
          </tbody>
        </table>
      </div>
      <div class="side">
        <button class="btn">Ajouter</button>
        <button class="btn">Supprimer</button>
        <fieldset class="radios">
          <legend>Numérotation</legend>
          <label><input type="radio" value="projet" bind:group={numbering} />Par projet</label>
          <label><input type="radio" value="feuille" bind:group={numbering} />Par feuille</label>
        </fieldset>
        <fieldset class="line">
          <legend>Ligne</legend>
          <button class="btn" disabled>Faire monter</button>
          <button class="btn">Faire descendre</button>
          <button class="btn" disabled>Fusionner vers le haut</button>
          <button class="btn">Fusionner vers le bas</button>
        </fieldset>
        <fieldset class="opts">
          <legend>Options de numérotation</legend>
          <button class="btn">Numérique...</button>
          <button class="btn">Alphanumérique...</button>
        </fieldset>
        <fieldset class="arc">
          <legend>Longueur de l'arc</legend>
          <input type="text" bind:value={arc} aria-label="Longueur de l'arc" />
        </fieldset>
      </div>
    </div>
    <div class="dlgfoot">
      <button class="btn default">OK</button>
      <button class="btn">Annuler</button>
      <button class="btn" disabled>Appliquer</button>
    </div>
    <svg class="grip" width="8" height="8" viewBox="0 0 8 8"><path d="M6 0h2v2H6zM3 3h2v2H3zM6 3h2v2H6zM0 6h2v2H0zM3 6h2v2H3zM6 6h2v2H6z" fill="#bbb" /></svg>

    <div class="frame"></div>
    <svg class="pointer" width="96" height="40" viewBox="0 0 96 40"><path d="M0 0l94 39H45z" fill="#2a80bb" /></svg>
    <div class="callout">Cliquer sur [Custom1]</div>
  </div>
</div>

<style>
  :global(body) {
    margin: 0;
    background: #fff;
  }
  .app {
    position: relative;
    display: flex;
    flex-direction: column;
    height: 100vh;
    overflow: hidden;
    font: 11px/16px "Open Sans", "Noto Sans", sans-serif;
    color: #222;
    background: #cbcbcb;
  }
  h1, h2, h3, p, ul {
    margin: 0;
    padding: 0;
    font-size: 11px;
    font-weight: 400;
  }
  button, input, select {
    font: inherit;
    color: inherit;
    margin: 0;
    padding: 0;
    border: 0;
    border-radius: 0;
    background: none;
    box-sizing: border-box;
  }
  button {
    white-space: nowrap;
  }
  svg {
    flex: none;
    display: block;
  }
  .caret {
    flex: none;
    width: 0;
    height: 0;
    border: 3px solid transparent;
    border-top: 4px solid #444;
    border-bottom: 0;
  }
  .caret.wide {
    border-width: 4px;
    border-top-width: 5px;
    border-bottom: 0;
  }
  .caret.lined {
    position: relative;
    border-width: 5px;
    border-top-width: 4px;
    border-bottom: 0;
    margin-top: 4px;
  }
  .caret.lined::before {
    content: "";
    position: absolute;
    left: -4px;
    top: -8px;
    width: 8px;
    height: 2px;
    background: #444;
  }
  .bar {
    width: 1px;
    height: 20px;
    background: #b4b4b4;
  }
  .drop {
    position: relative;
    display: flex;
    align-items: center;
    background: #fff;
  }
  .drop select {
    appearance: none;
    width: 100%;
    height: 100%;
  }
  .drop > svg, .drop > .caret {
    position: absolute;
    right: 5px;
    pointer-events: none;
  }

  /* title bar */
  .title {
    display: grid;
    grid-template-columns: 1fr auto 1fr;
    height: 29px;
  }
  .logo {
    margin: 0 4px;
  }
  .title h1 {
    padding-right: 44px;
    line-height: 20px;
    color: #333;
  }
  .tools {
    display: flex;
    align-items: center;
    justify-content: flex-end;
    height: 24px;
    gap: 8px;
    padding-right: 5px;
  }
  .play {
    border: 4px solid transparent;
    border-left: 5px solid #444;
    border-right: 0;
    margin-right: -4px;
  }
  .search {
    width: 180px;
    height: 22px;
    padding: 0 3px;
    margin-right: -4px;
    border: 1px solid #000;
    background: #fff;
  }
  .search::placeholder {
    color: #555;
    font-style: italic;
    opacity: 1;
  }
  .account, .help {
    display: flex;
    align-items: center;
    gap: 3px;
  }
  .help {
    gap: 6px;
    margin-right: 12px;
  }
  .win {
    margin-left: 3px;
  }

  .tabs {
    display: flex;
    height: 20px;
    gap: 1px;
    align-items: stretch;
  }
  .tabs button {
    padding: 0 10px;
    color: #222;
  }
  .tabs .file {
    width: 53px;
    padding: 0;
    background: #2a7ab0;
    color: #fff;
  }
  .tabs .on {
    background: #eee;
  }
  .mini {
    display: flex;
    align-items: center;
    gap: 2px;
    margin-left: auto;
    padding-right: 2px;
  }

  /* ribbon */
  .ribbon {
    display: flex;
    height: 95px;
    background: #eee;
  }
  .panel {
    flex: none;
    display: flex;
    flex-direction: column;
    box-sizing: border-box;
    border-right: 1px solid #dcdcdc;
  }
  .panel h2 {
    display: flex;
    align-items: center;
    justify-content: center;
    gap: 5px;
    height: 20px;
    white-space: nowrap;
  }
  .body {
    display: flex;
    justify-content: center;
    height: 72px;
    padding-top: 3px;
  }
  .big {
    display: flex;
    flex-direction: column;
    align-items: center;
    padding-top: 2px;
    color: #a6a6a6;
    line-height: 15px;
  }
  .big span {
    margin-top: 4px;
  }
  .col {
    display: flex;
    flex-direction: column;
  }
  .col.mid {
    padding-top: 12px;
  }
  .small {
    display: flex;
    align-items: center;
    gap: 5px;
    height: 24px;
    color: #a6a6a6;
    white-space: pre;
  }
  .small .caret {
    border-top-color: #666;
  }
  .p-select { width: 91px; }
  .p-settings { width: 925px; }
  .p-location { width: 135px; }
  .p-options { width: 209px; }
  .p-manage { width: 85px; }
  .p-phase { width: 128px; }
  .p-selection { width: 59px; }
  .p-inquiry { width: 98px; }
  .p-macros { width: 50px; }
  .p-visual { flex: 1; border-right: 0; }
  .p-settings .body {
    display: grid;
    grid-template-columns: 65px 163px 140px 197px 11px 246px 96px 6px;
    justify-content: start;
  }
  .materials {
    width: 62px;
  }
  .more {
    margin-top: 53px;
  }
  .p-location .body {
    justify-content: start;
    padding-left: 15px;
  }
  .p-options .body {
    gap: 3px;
  }
  .p-manage .body {
    gap: 6px;
  }
  .p-options .col {
    width: 150px;
  }
  .p-options .small {
    padding-left: 4px;
  }
  .p-options .drop {
    height: 18px;
    margin-top: 3px;
    border: 1px solid #d0d0d0;
    box-sizing: border-box;
    background: #f7f7f7;
  }
  .p-options select {
    padding-left: 3px;
    color: #444;
  }
  .p-visual .body {
    gap: 8px;
    padding-right: 4px;
  }
  .p-selection .small, .p-inquiry .small, .p-macros .small, .p-manage .small {
    gap: 0;
  }
  .rule {
    width: 1px;
    height: 72px;
    background: #ccc;
  }

  .quick {
    display: flex;
    align-items: center;
    gap: 8px;
    height: 25px;
    padding-left: 8px;
  }
  .quick button {
    display: flex;
    align-items: center;
    justify-content: center;
    height: 22px;
  }
  .quick .caret {
    margin-left: -2px;
  }
  .quick .bar {
    margin: 0 -1px;
  }
  .quick .lit {
    width: 24px;
    margin: 0 -4px;
    border: 1px solid #1f66b8;
    background: #b8d9f5;
    box-sizing: border-box;
  }
  .optbar {
    height: 26px;
    margin-bottom: 2px;
    background: #eee;
  }

  main {
    flex: 1;
    display: flex;
    min-height: 0;
    background: #eee;
  }
  h3 {
    flex: none;
    line-height: 20px;
    height: 20px;
  }
  .browser {
    display: flex;
    flex-direction: column;
    flex: none;
    width: 219px;
    border-right: 2px solid #ccc;
  }
  .browser h3 {
    padding-left: 3px;
    color: #444;
    white-space: nowrap;
  }
  .tree {
    flex: 1;
    margin: 0 2px 2px 1px;
    background: #fff;
    overflow: hidden;
  }
  ul {
    list-style: none;
    margin-left: 8px;
  }
  ul :global(ul) {
    margin-left: 20px;
  }
  li {
    position: relative;
  }
  li::before {
    content: "";
    position: absolute;
    left: 0;
    top: 0;
    height: 100%;
    border-left: 1px dotted #999;
  }
  li:last-child::before {
    height: 10px;
  }
  .tree > ul > li:first-child::before {
    top: 10px;
  }
  .node {
    position: relative;
    display: flex;
    align-items: center;
    height: 18px;
    padding-left: 12px;
    gap: 3px;
    white-space: nowrap;
    color: #111;
  }
  .node.leaf {
    padding-left: 16px;
    gap: 0;
  }
  .node::before {
    content: "";
    position: absolute;
    left: 0;
    top: 10px;
    width: 11px;
    border-top: 1px dotted #999;
  }
  .leaf::before {
    width: 15px;
  }
  .node span {
    padding: 0 3px;
    line-height: 18px;
  }
  .node .sel {
    background: #e2e2e2;
  }
  .bold {
    font-weight: 700;
  }
  .toggle {
    position: absolute;
    left: -4px;
    top: 6px;
  }
  .leaf span {
    padding-left: 2px;
  }

  /* documents */
  .docs {
    flex: 1;
    display: flex;
    flex-direction: column;
    min-width: 0;
    border-right: 2px solid #ccc;
    background: #fff;
  }
  .doctabs {
    display: flex;
    height: 20px;
    background: #ccc;
  }
  .doctab {
    display: flex;
    align-items: center;
    gap: 7px;
    width: 128px;
    box-sizing: border-box;
    padding: 0 5px;
    color: #a5a5a5;
    white-space: nowrap;
  }
  .doctab.blank {
    gap: 11px;
  }
  .doctab:not(.active) :global(svg) {
    opacity: .5;
  }
  .doctab.active {
    background: #fff;
    color: #c9c9c9;
  }
  .doctab button {
    margin-left: auto;
  }
  .doctabs .caret.lined {
    margin: 11px 5px 0 auto;
  }
  .view {
    flex: 1;
    display: flex;
    min-height: 0;
  }
  .canvas {
    position: relative;
    flex: 1;
    overflow: hidden;
  }
  .drawing {
    font-family: "Liberation Sans", Arial, sans-serif;
  }
  .navbar {
    position: absolute;
    right: 1px;
    top: 2px;
    border: 2px solid #bcbcbc;
    border-radius: 5px;
    background: #f0f0f0;
  }
  .vscroll {
    display: flex;
    flex-direction: column;
    align-items: center;
    justify-content: space-between;
    width: 16px;
    box-sizing: border-box;
    margin: 2px 2px 0 0;
    padding: 6px 0;
    background: #efefef;
  }
  .vscroll .thumb {
    width: 15px;
    height: 17px;
    background: #ccc;
  }
  .hscroll {
    display: flex;
    align-items: center;
    height: 16px;
    margin: 0 2px 2px 0;
    padding: 0 3px 0 3px;
    background: #efefef;
    gap: 5px;
  }
  .prev {
    margin-left: 4px;
  }
  .hscroll > .thumb {
    width: 17px;
    height: 16px;
    margin: 0 auto;
    background: #ccc;
  }
  .hscroll > .grip {
    margin: 6px 0 0 6px;
  }

  /* properties */
  .props {
    display: flex;
    flex-direction: column;
    flex: none;
    width: 216px;
    padding-left: 2px;
  }
  .props h3 {
    padding-left: 2px;
    color: #333;
  }
  .type {
    display: flex;
    align-items: center;
    height: 72px;
    box-sizing: border-box;
    border: 1px solid #ccc;
    padding: 0 2px;
    background: #efefef;
    color: #333;
  }
  .type .caret {
    margin: 0 0 0 auto;
  }
  .thumbnail {
    display: grid;
    place-items: center;
    width: 66px;
    height: 66px;
    box-sizing: border-box;
    border: 1px solid #ccc;
    margin-right: 4px;
  }
  .filter {
    display: flex;
    align-items: center;
    gap: 6px;
    height: 25px;
  }
  .filter .drop {
    width: 98px;
    height: 23px;
    box-sizing: border-box;
    border: 1px solid #adadad;
    background: #e2e2e2;
  }
  .filter select {
    padding-left: 3px;
    background: none;
  }
  .filter button {
    display: flex;
    align-items: center;
    gap: 5px;
  }
  .grid {
    flex: 1;
    background: #fff;
    overflow: hidden;
  }
  .grid table {
    width: 100%;
    table-layout: fixed;
    border-collapse: separate;
    border-spacing: 0;
  }
  .c1 { width: 103px; }
  .c3 { width: 12px; }
  .grid td, .grid th {
    height: 18px;
    box-sizing: border-box;
    padding: 0 0 0 2px;
    line-height: 16px;
    border-right: 1px dotted #555;
    border-bottom: 1px dotted #555;
    font-weight: 400;
    text-align: left;
    white-space: nowrap;
    overflow: hidden;
    color: #000;
  }
  .grid .name {
    padding-left: 8px;
  }
  .grid .ro td {
    color: #7a7a7a;
  }
  .grid .indent {
    padding-left: 5px;
  }
  .grid .group th {
    border: 0;
    background: #dadada;
  }
  .group div {
    display: flex;
    align-items: center;
    justify-content: space-between;
    padding-right: 5px;
  }
  .grid .tight {
    padding-left: 1px;
  }
  .grid td button {
    display: block;
    width: 100%;
    height: 16px;
    line-height: 12px;
    border: 1px solid #adadad;
    border-width: 1px 2px 2px 1px;
    background: #e1e1e1;
  }
  input[type="checkbox"] {
    appearance: none;
    display: block;
    position: relative;
    width: 13px;
    height: 13px;
    border: 1px solid #222;
    background: #fff;
  }
  input[type="checkbox"]:disabled {
    border-color: #ccc;
  }
  input[type="checkbox"]:checked::after {
    content: "";
    position: absolute;
    left: 3px;
    top: 0;
    width: 3px;
    height: 7px;
    border: solid #222;
    border-width: 0 1px 1px 0;
    transform: rotate(40deg);
  }
  .props footer {
    display: flex;
    align-items: center;
    justify-content: space-between;
    height: 28px;
    padding: 0 1px 0 2px;
  }
  .props footer a {
    color: #1560b0;
  }
  .props footer button {
    width: 74px;
    height: 22px;
    border: 1px solid #bfbfbf;
    background: #ccc;
    color: #888;
  }

  .status {
    display: flex;
    align-items: center;
    height: 24px;
  }
  .ready {
    width: 834px;
    box-sizing: border-box;
    padding-left: 1px;
    color: #000;
  }
  .status .drop {
    width: 205px;
    height: 18px;
    margin: 0 8px;
  }
  .status select {
    padding-left: 3px;
    color: #777;
  }
  .count, .toggles, .toggles span {
    display: flex;
    align-items: center;
    color: #222;
  }
  .count {
    gap: 5px;
    margin-right: 22px;
  }
  .count + :global(svg) {
    margin-right: 10px;
  }
  .toggles {
    gap: 10px;
    margin-left: auto;
    padding-right: 64px;
  }

  /* revisions dialog */
  .dialog {
    position: absolute;
    left: 505px;
    top: 250px;
    width: 910px;
    height: 533px;
    box-sizing: border-box;
    border: 1px solid #3a7fb8;
    background: #f0f0f0;
    box-shadow: 0 4px 14px rgba(0, 0, 0, .4);
    color: #000;
  }
  .dlgbar {
    display: flex;
    align-items: center;
    height: 30px;
    padding: 0 18px 0 8px;
    background: #fff;
  }
  .dlgbar h2 {
    flex: 1;
  }
  .dlgbar button {
    margin-left: 36px;
    font-size: 13px;
  }
  .dlgmain {
    display: flex;
    gap: 14px;
    padding: 14px 22px 0 12px;
  }
  .sheetbox {
    flex: 1;
    height: 425px;
    border: 1px solid #fff;
    border-top-color: #888;
    border-left-color: #888;
    box-sizing: border-box;
    background: #fff;
  }
  .revs {
    width: 100%;
    height: 423px;
    table-layout: fixed;
    border-collapse: separate;
    border-spacing: 0;
  }
  .r1 { width: 52px; }
  .r2 { width: 84px; }
  .r3 { width: 66px; }
  .r4 { width: 106px; }
  .r5 { width: 66px; }
  .r6 { width: 65px; }
  .r7 { width: 69px; }
  .revs th, .revs td {
    height: 18px;
    box-sizing: border-box;
    padding: 0 0 0 2px;
    font-weight: 400;
    line-height: 16px;
    border-right: 1px dotted #666;
    border-bottom: 1px dotted #666;
    white-space: nowrap;
    overflow: hidden;
  }
  .revs th {
    padding: 0;
    background: #f0f0f0;
    border-right: 1px solid #000;
    border-bottom: 1px solid #000;
  }
  .revs thead th {
    height: 22px;
    border-top: 1px solid #000;
  }
  .revs .rest th, .revs .rest td {
    height: auto;
  }
  .revs .mid {
    padding: 0;
  }
  .revs .mid input {
    margin: 0 auto;
  }
  .revs .edit {
    padding: 0;
  }
  .revs .drop {
    height: 17px;
    border: 1px solid #000;
    border-right-width: 2px;
    box-sizing: border-box;
  }
  .revs .drop select {
    padding-left: 1px;
  }
  .arrow {
    position: absolute;
    right: 0;
    top: 0;
    display: grid;
    place-items: center;
    width: 14px;
    height: 15px;
    background: #e1e1e1;
    pointer-events: none;
  }
  .side {
    flex: none;
    display: flex;
    flex-direction: column;
    width: 162px;
  }
  .btn {
    height: 22px;
    border: 1px solid #adadad;
    background: #e1e1e1;
  }
  .btn:disabled {
    border-color: #bfbfbf;
    background: #ccc;
    color: #838383;
  }
  .side > .btn {
    margin: 1px 2px 9px 6px;
  }
  fieldset {
    display: flex;
    flex-direction: column;
    min-width: 0;
    width: 156px;
    box-sizing: border-box;
    margin: 0;
    padding: 0 13px 0 14px;
    border: 1px solid #dcdcdc;
  }
  legend {
    margin-left: -8px;
    padding: 0 2px;
    line-height: 16px;
    white-space: nowrap;
  }
  fieldset .btn {
    margin-bottom: 7px;
  }
  .radios {
    height: 69px;
  }
  .radios label {
    display: flex;
    align-items: center;
    gap: 3px;
    height: 23px;
  }
  .radios input {
    appearance: none;
    width: 13px;
    height: 13px;
    border: 1px solid #333;
    border-radius: 50%;
    background: #fff;
  }
  .radios input:checked {
    background: radial-gradient(circle, #222 3px, #fff 4px);
  }
  .line {
    height: 142px;
    margin-top: 7px;
    padding-top: 5px;
  }
  .opts {
    height: 82px;
    margin-top: 6px;
    padding-top: 5px;
  }
  .arc {
    height: 50px;
    margin-top: 7px;
    padding-top: 3px;
  }
  .arc input {
    height: 24px;
    padding: 0 6px 4px;
    border: 1px solid #7a7a7a;
    background: #fff;
    text-align: right;
  }
  .dlgfoot {
    display: flex;
    justify-content: flex-end;
    gap: 8px;
    padding: 21px 25px 0 0;
  }
  .dlgfoot .btn {
    width: 103px;
  }
  .dlgfoot .default {
    border: 2px solid #1b73b8;
  }
  .dialog > .grip {
    position: absolute;
    right: 2px;
    bottom: 2px;
  }
  .frame {
    position: absolute;
    left: 61px;
    top: 73px;
    width: 125px;
    height: 45px;
    box-sizing: border-box;
    border: 5px solid #f00;
    border-radius: 3px;
  }
  .pointer {
    position: absolute;
    left: 128px;
    top: 96px;
  }
  .callout {
    position: absolute;
    left: 123px;
    top: 135px;
    width: 250px;
    height: 80px;
    background: #2a80bb;
    color: #fff;
    font: 18px/80px "Liberation Sans", Arial, sans-serif;
    text-align: center;
  }
</style>
